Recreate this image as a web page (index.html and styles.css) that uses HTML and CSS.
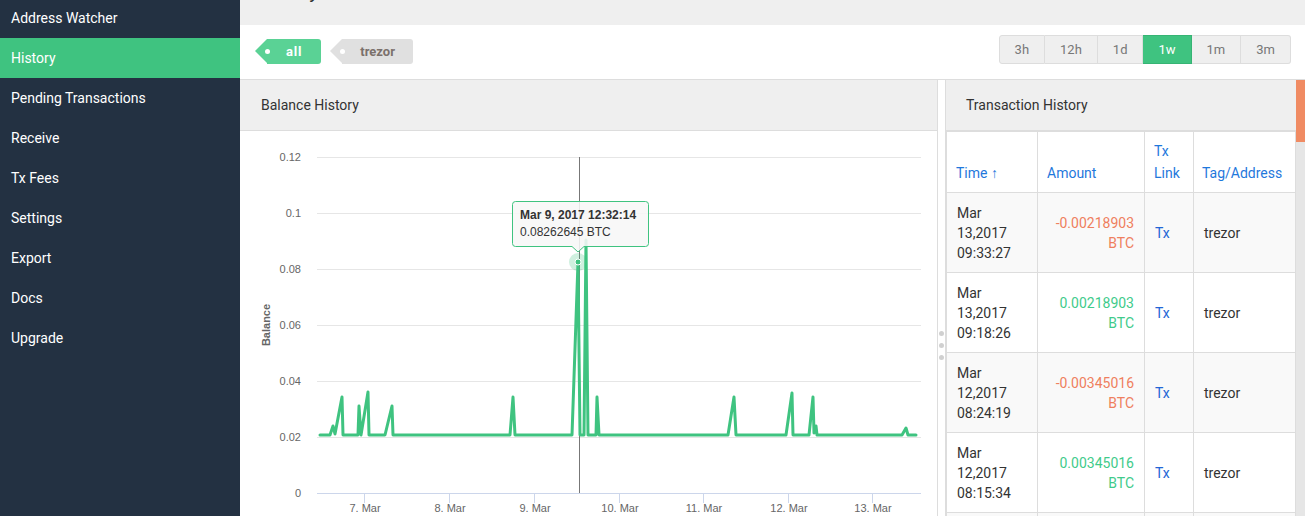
FILE: index.html
```html
<!DOCTYPE html>
<html>
<head>
<meta charset="utf-8">
<title>History</title>
<link rel="stylesheet" href="styles.css">
</head>
<body>
<aside class="sidebar">
  <ul class="nav">
    <li class="nav-item">Address Watcher</li>
    <li class="nav-item active">History</li>
    <li class="nav-item">Pending Transactions</li>
    <li class="nav-item">Receive</li>
    <li class="nav-item">Tx Fees</li>
    <li class="nav-item">Settings</li>
    <li class="nav-item">Export</li>
    <li class="nav-item">Docs</li>
    <li class="nav-item">Upgrade</li>
  </ul>
</aside>
<main class="content">
  <header class="topbar"><h1 class="page-title">History</h1></header>
  <div class="toolbar">
    <div class="tags">
      <span class="tag tag-all">all</span>
      <span class="tag tag-trezor">trezor</span>
    </div>
    <div class="range">
      <span class="range-btn">3h</span>
      <span class="range-btn">12h</span>
      <span class="range-btn">1d</span>
      <span class="range-btn active">1w</span>
      <span class="range-btn">1m</span>
      <span class="range-btn">3m</span>
    </div>
  </div>
  <div class="panels">
    <section class="panel chart-panel">
      <div class="panel-head">Balance History</div>
      <svg class="chart" width="697" height="385" viewBox="240 131 697 385">
        <g class="grid">
          <line x1="317" y1="157.5" x2="921" y2="157.5"/>
          <line x1="317" y1="213.5" x2="921" y2="213.5"/>
          <line x1="317" y1="269.5" x2="921" y2="269.5"/>
          <line x1="317" y1="325.5" x2="921" y2="325.5"/>
          <line x1="317" y1="381.5" x2="921" y2="381.5"/>
          <line x1="317" y1="437.5" x2="921" y2="437.5"/>
        </g>
        <g class="axis">
          <line x1="317" y1="493.5" x2="921" y2="493.5"/>
          <line x1="364.5" y1="493" x2="364.5" y2="503"/>
          <line x1="449.5" y1="493" x2="449.5" y2="503"/>
          <line x1="534.5" y1="493" x2="534.5" y2="503"/>
          <line x1="619.5" y1="493" x2="619.5" y2="503"/>
          <line x1="703.5" y1="493" x2="703.5" y2="503"/>
          <line x1="788.5" y1="493" x2="788.5" y2="503"/>
          <line x1="872.5" y1="493" x2="872.5" y2="503"/>
        </g>
        <g class="ylabels">
          <text x="301" y="161">0.12</text>
          <text x="301" y="217">0.1</text>
          <text x="301" y="273">0.08</text>
          <text x="301" y="329">0.06</text>
          <text x="301" y="385">0.04</text>
          <text x="301" y="441">0.02</text>
          <text x="301" y="497">0</text>
        </g>
        <text class="ytitle" x="270" y="325" transform="rotate(-90 270 325)">Balance</text>
        <g class="xlabels">
          <text x="365" y="512">7. Mar</text>
          <text x="450" y="512">8. Mar</text>
          <text x="535" y="512">9. Mar</text>
          <text x="620" y="512">10. Mar</text>
          <text x="704" y="512">11. Mar</text>
          <text x="789" y="512">12. Mar</text>
          <text x="873" y="512">13. Mar</text>
        </g>
        <line class="crosshair" x1="579.5" y1="157" x2="579.5" y2="493"/>
        <polyline class="series" points="320,435 330,435 333,426 335,434 342,397 343,435 358,435 359,406 361,435 368,392 369,435 385,435 392,406 393,435 510,435 513,397 515,435 572,435 578,262 580,435 584,435 586,240 588,435 596,435 597,397 599,435 728,435 734,397 736,435 786,435 792,393 793,435 809,435 813,397 814,433 816,426 817,435 902,435 906,428 908,435 916,435"/>
        <circle class="halo" cx="578" cy="262" r="9"/>
        <circle class="marker" cx="578" cy="262" r="3"/>
        <path class="tooltip-box" d="M515.5 201.5 H645.5 Q648.5 201.5 648.5 204.5 V243.5 Q648.5 246.5 645.5 246.5 H584 L578 252 L572 246.5 H515.5 Q512.5 246.5 512.5 243.5 V204.5 Q512.5 201.5 515.5 201.5 Z"/>
        <text class="tooltip-title" x="520" y="219">Mar 9, 2017 12:32:14</text>
        <text class="tooltip-value" x="520" y="236">0.08262645 BTC</text>
      </svg>
    </section>
    <div class="splitter">
      <span class="dot"></span><span class="dot"></span><span class="dot"></span>
    </div>
    <section class="panel tx-panel">
      <div class="panel-head">Transaction History</div>
      <table class="tx-table">
        <colgroup>
          <col class="col-time"><col class="col-amount"><col class="col-link"><col class="col-tag">
        </colgroup>
        <thead>
          <tr>
            <th>Time ↑</th>
            <th>Amount</th>
            <th>Tx Link</th>
            <th class="nowrap">Tag/Address</th>
          </tr>
        </thead>
        <tbody>
          <tr>
            <td>Mar 13,2017 09:33:27</td>
            <td class="amount neg">-0.00218903 BTC</td>
            <td><a class="tx-link">Tx</a></td>
            <td>trezor</td>
          </tr>
          <tr>
            <td>Mar 13,2017 09:18:26</td>
            <td class="amount pos">0.00218903 BTC</td>
            <td><a class="tx-link">Tx</a></td>
            <td>trezor</td>
          </tr>
          <tr>
            <td>Mar 12,2017 08:24:19</td>
            <td class="amount neg">-0.00345016 BTC</td>
            <td><a class="tx-link">Tx</a></td>
            <td>trezor</td>
          </tr>
          <tr>
            <td>Mar 12,2017 08:15:34</td>
            <td class="amount pos">0.00345016 BTC</td>
            <td><a class="tx-link">Tx</a></td>
            <td>trezor</td>
          </tr>
          <tr>
            <td>Mar 12,2017 07:58:02</td>
            <td class="amount neg">-0.00125000 BTC</td>
            <td><a class="tx-link">Tx</a></td>
            <td>trezor</td>
          </tr>
        </tbody>
      </table>
    </section>
    <div class="scrollbar"><div class="thumb"></div></div>
  </div>
</main>
</body>
</html>
```

FILE: styles.css
```css
* { box-sizing: border-box; }

html, body {
  margin: 0;
  padding: 0;
  height: 516px;
  overflow: hidden;
}

body {
  display: flex;
  font-family: Roboto, "Liberation Sans", sans-serif;
  font-size: 14px;
  color: #333;
  background: #fff;
}

/* Sidebar */
.sidebar {
  width: 240px;
  flex: 0 0 240px;
  background: #233142;
  overflow: hidden;
}

.nav {
  list-style: none;
  margin: -2px 0 0;
  padding: 0;
}

.nav-item {
  height: 40px;
  line-height: 40px;
  padding-left: 11px;
  color: #fff;
  font-size: 14px;
}

.nav-item.active {
  background: #3fc380;
}

/* Main content */
.content {
  flex: 1;
  display: flex;
  flex-direction: column;
  min-width: 0;
}

.topbar {
  height: 25px;
  flex: 0 0 25px;
  background: #efefef;
  overflow: hidden;
  padding-left: 15px;
}

.page-title {
  margin: -21px 0 0;
  font-size: 20px;
  font-weight: 400;
  line-height: 24px;
  color: #333;
}

.toolbar {
  height: 55px;
  flex: 0 0 55px;
  display: flex;
  justify-content: space-between;
  align-items: flex-start;
  padding: 10px 14px 0 15px;
  border-bottom: 1px solid #ddd;
}

.tags {
  display: flex;
  gap: 9px;
  margin-top: 4px;
}

.tag {
  position: relative;
  margin-left: 12px;
  height: 25px;
  line-height: 25px;
  padding: 0 18px;
  border-radius: 0 3px 3px 0;
  font-size: 13px;
  font-weight: 700;
}

.tag::before {
  content: "";
  position: absolute;
  left: -12px;
  top: 0;
  width: 0;
  height: 0;
  border-style: solid;
  border-width: 12.5px 12px 12.5px 0;
  border-color: transparent;
}

.tag::after {
  content: "";
  position: absolute;
  left: -2px;
  top: 10px;
  width: 5px;
  height: 5px;
  border-radius: 50%;
  background: #fff;
}

.tag-all {
  background: #5ad295;
  color: #fff;
  padding: 0 19px;
  letter-spacing: 0.8px;
}
.tag-all::before { border-right-color: #5ad295; }

.tag-trezor {
  background: #e0e0e0;
  color: #7b716c;
}
.tag-trezor::before { border-right-color: #e0e0e0; }

.range {
  display: flex;
}

.range-btn {
  height: 29px;
  line-height: 27px;
  padding: 0 15px;
  background: #efefef;
  border: 1px solid #ddd;
  border-left: none;
  color: #777;
  font-size: 13px;
}

.range-btn:first-child {
  border-left: 1px solid #ddd;
  border-radius: 3px 0 0 3px;
}

.range-btn:last-child {
  border-radius: 0 3px 3px 0;
}

.range-btn.active {
  background: #3fc380;
  border-color: #36b474;
  color: #fff;
}

/* Panels */
.panels {
  flex: 1;
  display: flex;
  min-height: 0;
  overflow: hidden;
}

.panel {
  display: flex;
  flex-direction: column;
  overflow: hidden;
}

.panel-head {
  height: 51px;
  flex: 0 0 51px;
  line-height: 50px;
  padding-left: 21px;
  background: #efefef;
  border-bottom: 1px solid #ddd;
  font-size: 14px;
  color: #333;
}

.chart-panel {
  width: 698px;
  flex: 0 0 698px;
  border-right: 1px solid #ddd;
}

.chart {
  display: block;
  font-family: "Liberation Sans", Arial, sans-serif;
}

.grid line { stroke: #e6e6e6; stroke-width: 1; }
.axis line { stroke: #ccd6eb; stroke-width: 1; }

.ylabels text {
  font-size: 11px;
  fill: #666;
  text-anchor: end;
}

.xlabels text {
  font-size: 11px;
  fill: #666;
  text-anchor: middle;
}

.ytitle {
  font-size: 11px;
  font-weight: 700;
  fill: #666;
  text-anchor: middle;
}

.crosshair { stroke: #777; stroke-width: 1; }

.series {
  fill: none;
  stroke: #3fc380;
  stroke-width: 3;
  stroke-linejoin: round;
  stroke-linecap: round;
}

.halo { fill: rgba(63, 195, 128, 0.25); }
.marker { fill: #3fc380; stroke: #fff; stroke-width: 1; }

.tooltip-box {
  fill: rgba(247, 247, 247, 0.88);
  stroke: #3fc380;
  stroke-width: 1;
}

.tooltip-title {
  font-size: 12px;
  font-weight: 700;
  fill: #333;
}

.tooltip-value {
  font-size: 12px;
  fill: #333;
}

.splitter {
  width: 7px;
  flex: 0 0 7px;
  display: flex;
  flex-direction: column;
  align-items: center;
  padding-top: 251px;
  gap: 7px;
}

.dot {
  width: 5px;
  height: 5px;
  border-radius: 50%;
  background: #d0d0d0;
}

.tx-panel {
  width: 351px;
  flex: 0 0 351px;
  border-left: 1px solid #ddd;
}

.tx-panel .panel-head {
  padding-left: 20px;
}

.tx-table {
  width: 100%;
  table-layout: fixed;
  border-collapse: collapse;
  font-size: 14px;
}

.col-time { width: 91px; }
.col-amount { width: 107px; }
.col-link { width: 49px; }

.tx-table th,
.tx-table td {
  border: 1px solid #ddd;
}

.tx-table th {
  padding: 8px 10px 8px 9px;
  line-height: 22px;
  text-align: left;
  vertical-align: bottom;
  font-weight: 400;
  color: #1f78dc;
}

.tx-table th.nowrap { white-space: nowrap; padding-left: 8px; }

.tx-table td {
  padding: 10px 10px 9px;
  line-height: 20px;
  vertical-align: middle;
  color: #333;
}

.tx-table tbody tr:nth-child(odd) td {
  background: #f9f9f9;
}

.amount { text-align: right; }
.amount.neg { color: #ef7f5e; }
.amount.pos { color: #3fcb8b; }

.tx-link { color: #2266d6; }

.scrollbar {
  width: 9px;
  flex: 0 0 9px;
  background: #e6e6e6;
}

.thumb {
  height: 62px;
  background: #f08b63;
}
```
